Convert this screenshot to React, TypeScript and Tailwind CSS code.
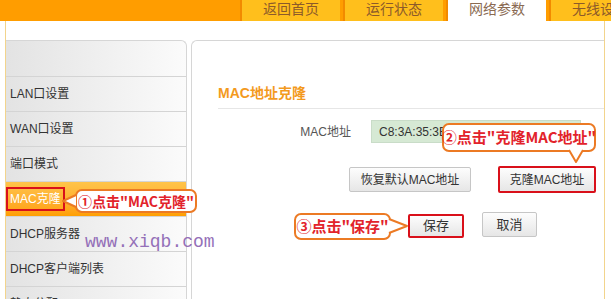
import React from "react";

const cjk = { fontFamily: '"Liberation Sans", "Noto Sans CJK SC", sans-serif' };
const bold = { fontFamily: '"Noto Sans CJK SC", "Liberation Sans", sans-serif' };

const menu = ["LAN口设置", "WAN口设置", "端口模式", "MAC克隆", "DHCP服务器", "DHCP客户端列表", "静态分配IP"];

const Tabs = () => {
    const tabs = ["返回首页", "运行状态", "网络参数", "无线设置"];
    return (
        <div className="flex h-[21px] bg-[#ff9d00]">
            <div className="w-[237px] shrink-0" />
            {tabs.map((t, i) => (
                <div
                    key={t}
                    className={`ml-[3px] flex h-full w-[100px] shrink-0 justify-center border-l-2 border-[#f28a00] pt-[1px] text-[14px] leading-[16px] ${
                        i === 2 ? "bg-white text-[#8a6a52]" : "bg-[#ffbf1c] text-[#8c5a2a]"
                    }`}
                >
                    {t}
                </div>
            ))}
        </div>
    );
};

const Sidebar = () => (
    <div className="w-[181px] shrink-0 overflow-hidden rounded-tr-[6px] border-r border-t border-[#d6d6d6] bg-linear-to-r from-[#e3e3e3] to-[#fbfbfb]">
        <div className="h-[35px]" />
        {menu.map((m) => (
            <div
                key={m}
                className={`flex h-[35px] items-center whitespace-nowrap border-t border-[#d4d4d4] text-[12px] ${
                    m === "MAC克隆" ? "bg-linear-to-b from-[#ffc44a] to-[#ff9f00] text-white" : "text-[#333]"
                }`}
            >
                {m === "MAC克隆" ? (
                    <span className="flex h-[24px] items-center border-2 border-[#d9101a] px-[2px]">{m}</span>
                ) : (
                    <span className="pl-[4px]">{m}</span>
                )}
            </div>
        ))}
    </div>
);

const Btn = ({ children, className = "" }: { children: React.ReactNode; className?: string }) => (
    <div
        className={`flex items-center justify-center whitespace-nowrap rounded-[2px] border border-[#c6c6c6] bg-linear-to-b from-[#fdfdfd] to-[#e6e6e6] text-[#333] ${className}`}
    >
        {children}
    </div>
);

const Main = () => (
    <div className="flex-1 rounded-tl-[6px] border-l border-t border-[#d6d6d6] bg-white">
        <div className="ml-[26px] border-b border-[#e6e6e6] pb-[5px] pt-[42px] text-[14px] font-semibold leading-[20px] text-[#f39a1e]">
            MAC地址克隆
        </div>
        <div className="mt-[11px] flex items-center">
            <div className="w-[159px] text-right text-[12px] text-[#555]">MAC地址</div>
            <div className="ml-[20px] flex h-[23px] w-[210px] items-center border border-[#c9dcc8] bg-[#d6e9d4] pl-[7px] text-[12px] text-[#333]">
                C8:3A:35:3E
            </div>
        </div>
        <div className="mt-[23px] flex items-center pl-[157px]">
            <Btn className="h-[25px] w-[122px] text-[12px]">恢复默认MAC地址</Btn>
            <Btn className="ml-[27px] h-[27px] w-[98px] border-2 border-[#d9101a] text-[12px]">克隆MAC地址</Btn>
        </div>
        <div className="mt-[19px] flex items-start pl-[216px]">
            <Btn className="mt-[2px] h-[24px] w-[56px] border-2 border-[#d9101a] text-[13px]">保存</Btn>
            <Btn className="ml-[18px] h-[25px] w-[55px] text-[13px]">取消</Btn>
        </div>
    </div>
);

const Tail = ({ className, points }: { className: string; points: string }) => (
    <svg className={`absolute ${className}`} overflow="visible">
        <polygon points={points} fill="white" />
        <polyline points={points} fill="none" stroke="#ec7a24" strokeWidth="2" strokeLinejoin="round" />
    </svg>
);

const bubble =
    "absolute flex items-center justify-center rounded-[7px] border-2 border-[#ec7a24] bg-white font-bold text-[#e2232b] whitespace-nowrap";

export default function App() {
    return (
        <div className="relative h-[299px] w-[611px] overflow-hidden bg-white" style={cjk}>
            <Tabs />
            <div className="ml-[5px] h-[278px] w-[600px] border-l border-r border-[#f2d48c] pt-[19px]">
                <div className="flex h-full gap-[4px]">
                    <Sidebar />
                    <Main />
                </div>
            </div>

            <div className="absolute left-[85px] top-[231px] text-[18px] leading-[22px] text-[#9470b8]" style={{ fontFamily: '"Liberation Mono", monospace' }}>
                www.xiqb.com
            </div>

            <div className={`${bubble} left-[75px] top-[189px] h-[24px] w-[122px] text-[14px]`} style={bold}>
                ①点击"MAC克隆"
            </div>
            <Tail className="left-[62px] top-[194px] h-[14px] w-[15px]" points="14,1 1,7 14,13" />

            <div className={`${bubble} left-[442px] top-[123px] h-[29px] w-[154px] text-[15px]`} style={bold}>
                ②点击"克隆MAC地址"
            </div>
            <Tail className="left-[565px] top-[150px] h-[14px] w-[20px]" points="4,0 11,12 18,0" />

            <div className={`${bubble} left-[294px] top-[213px] h-[27px] w-[97px] text-[15px]`} style={bold}>
                ③点击"保存"
            </div>
            <Tail className="left-[389px] top-[218px] h-[16px] w-[20px]" points="0,1 18,8 0,15" />
        </div>
    );
}
